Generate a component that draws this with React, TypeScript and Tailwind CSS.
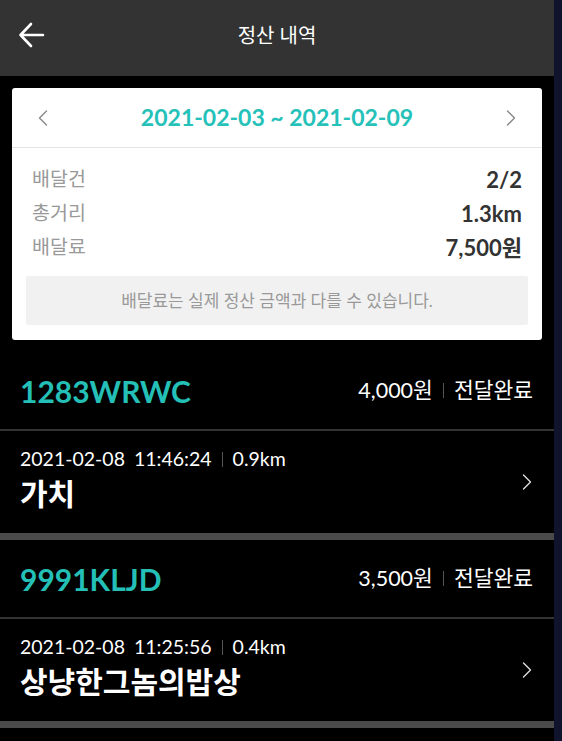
import React from "react";

const F = "font-['Lato','Noto_Sans_CJK_KR',sans-serif]";

function Chevron({ dir, className }: { dir: "left" | "right"; className?: string }) {
  return (
    <svg width="10" height="16" viewBox="0 0 10 16" className={className} fill="none">
      {dir === "left" ? (
        <path d="M8.5 1 L1.5 8 L8.5 15" stroke="currentColor" strokeWidth="1.4" strokeLinecap="round" strokeLinejoin="round" />
      ) : (
        <path d="M1.5 1 L8.5 8 L1.5 15" stroke="currentColor" strokeWidth="1.4" strokeLinecap="round" strokeLinejoin="round" />
      )}
    </svg>
  );
}

function Item({ code, price, date, time, dist, name }: { code: string; price: string; date: string; time: string; dist: string; name: string }) {
  return (
    <div>
      <div className="h-[77px] flex items-center justify-between pl-5 pr-[21px]">
        <span className="text-[30px] font-bold text-[#24c0b8] leading-none">{code}</span>
        <div className="flex items-center text-[21.5px] text-white">
          <span>{price}</span>
          <span className="mx-[10px] w-px h-[15px] bg-[#555]" />
          <span>전달완료</span>
        </div>
      </div>
      <div className="h-[2px] bg-[#333]" />
      <div className="h-[102px] flex items-center justify-between pl-5 pr-[22px]">
        <div className="flex flex-col -mt-[4px]">
          <div className="flex items-center text-[19.5px] text-white leading-[24px]">
            <span>{date}</span>
            <span className="ml-[9px]">{time}</span>
            <span className="mx-[10px] w-px h-[15px] bg-[#555]" />
            <span>{dist}</span>
          </div>
          <div className="text-[30px] font-bold text-white leading-[40px] mt-[2px]">{name}</div>
        </div>
        <Chevron dir="right" className="text-[#ddd] w-[10px] h-[18px]" />
      </div>
      <div className="h-[7px] bg-[#4a4a4a]" />
    </div>
  );
}

export default function App() {
  return (
    <div className={`flex w-[562px] min-h-[741px] ${F}`}>
      <div className="w-[554px] bg-black flex flex-col">
        <div className="h-[76px] bg-[#333333] relative flex items-center justify-center pb-[6px]">
          <svg className="absolute left-[18px] top-[22px]" width="27" height="26" viewBox="0 0 27 26" fill="none">
            <path d="M13 2 L2.5 13 L13 24 M2.5 13 L25 13" stroke="white" strokeWidth="2.6" strokeLinecap="round" strokeLinejoin="round" />
          </svg>
          <span className="text-white text-[20px]">정산 내역</span>
        </div>
        <div className="p-3">
          <div className="bg-white rounded-[3px]">
            <div className="h-[60px] flex items-center justify-between px-[26px] border-b border-[#e3e3e3]">
              <Chevron dir="left" className="text-[#888] w-[10px] h-[16px]" />
              <span className="text-[23px] font-bold text-[#26c1b9]">2021-02-03 ~ 2021-02-09</span>
              <Chevron dir="right" className="text-[#888] w-[10px] h-[16px]" />
            </div>
            <div className="px-[14px] pt-[14px] pb-[15px]">
              <div className="px-[6px]">
                {[
                  ["배달건", "2/2"],
                  ["총거리", "1.3km"],
                  ["배달료", "7,500원"],
                ].map(([l, v]) => (
                  <div key={l} className="h-[34px] flex items-center justify-between">
                    <span className="text-[19.5px] text-[#999]">{l}</span>
                    <span className="text-[22px] font-bold text-[#333]">{v}</span>
                  </div>
                ))}
              </div>
              <div className="mt-[12px] h-[49px] bg-[#f1f1f1] rounded-[2px] flex items-center justify-center text-[17px] text-[#999]">
                배달료는 실제 정산 금액과 다를 수 있습니다.
              </div>
            </div>
          </div>
        </div>
        <Item code="1283WRWC" price="4,000원" date="2021-02-08" time="11:46:24" dist="0.9km" name="가치" />
        <Item code="9991KLJD" price="3,500원" date="2021-02-08" time="11:25:56" dist="0.4km" name="상냥한그놈의밥상" />
        <div className="flex-1" />
      </div>
      <div className="w-[8px] bg-[#10132c]" />
    </div>
  );
}
